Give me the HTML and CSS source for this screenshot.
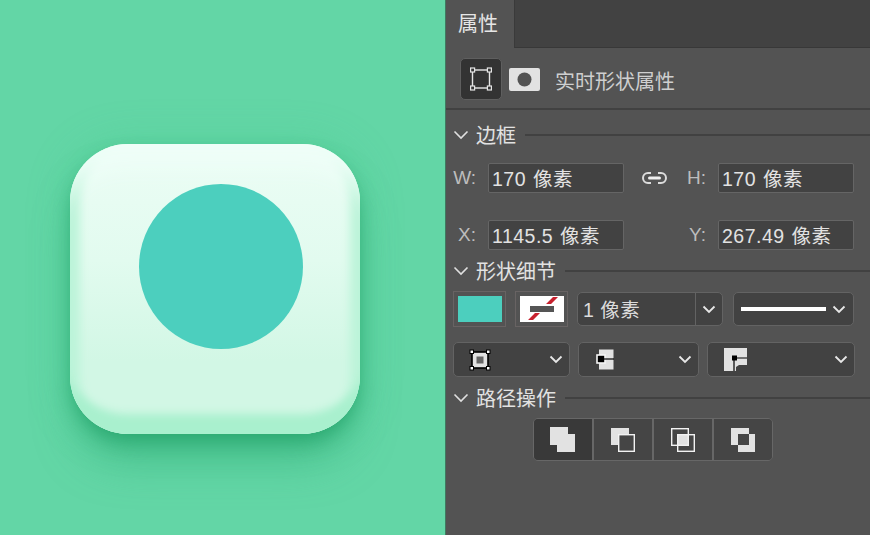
FILE: index.html
```html
<!DOCTYPE html>
<html lang="zh-CN">
<head>
  <meta charset="UTF-8" />
  <meta name="viewport" content="width=device-width, initial-scale=1.0" />
  <title>属性</title>
  <link rel="stylesheet" href="styles.css">
</head>
<body>
  <div class="canvas">
    <div class="app-icon">
      <div class="app-dot"></div>
    </div>
  </div>

  <div class="panel">
    <div class="tabbar">
      <div class="tab">属性</div>
      <div class="tab-rest"></div>
    </div>

    <div class="shape-head">
      <div class="shape-btn">
        <svg width="22" height="24" viewBox="0 0 22 24">
          <rect x="2.5" y="3" width="17" height="18" fill="none" stroke="#e4e4e4" stroke-width="1.4"/>
          <g fill="#333" stroke="#e4e4e4" stroke-width="1.2">
            <rect x="0.6" y="1" width="4" height="4"/>
            <rect x="17.4" y="1" width="4" height="4"/>
            <rect x="0.6" y="19" width="4" height="4"/>
            <rect x="17.4" y="19" width="4" height="4"/>
          </g>
        </svg>
      </div>
      <svg class="mask-icon" width="31" height="23" viewBox="0 0 31 23">
        <rect width="31" height="23" rx="2" fill="#e2e2e2"/>
        <circle cx="15.5" cy="11.5" r="7" fill="#535353"/>
      </svg>
      <span class="head-title">实时形状属性</span>
    </div>

    <div class="section-title first">
      <svg class="chev" width="16" height="10" viewBox="0 0 16 10"><path d="M1.5 1.5 8 8l6.5-6.5" fill="none" stroke="#e0e0e0" stroke-width="1.6"/></svg>
      <span>边框</span>
      <i class="rule"></i>
    </div>

    <div class="field-row top">
      <label class="lbl">W:</label>
      <div class="input">170 像素</div>
      <div class="mid">
        <svg width="27" height="14" viewBox="0 0 27 14">
          <path d="M10 2H7a5 5 0 0 0 0 10h3M17 2h3a5 5 0 0 1 0 10h-3" fill="none" stroke="#dcdcdc" stroke-width="2"/>
          <rect x="7" y="5.5" width="13" height="3" rx="1.5" fill="#f0f0f0"/>
        </svg>
        <label class="lbl">H:</label>
      </div>
      <div class="input">170 像素</div>
    </div>

    <div class="field-row bottom">
      <label class="lbl">X:</label>
      <div class="input">1145.5 像素</div>
      <div class="mid end">
        <label class="lbl">Y:</label>
      </div>
      <div class="input">267.49 像素</div>
    </div>

    <div class="section-title detail">
      <svg class="chev" width="16" height="10" viewBox="0 0 16 10"><path d="M1.5 1.5 8 8l6.5-6.5" fill="none" stroke="#e0e0e0" stroke-width="1.6"/></svg>
      <span>形状细节</span>
      <i class="rule"></i>
    </div>

    <div class="stroke-row">
      <div class="swatch"><div class="swatch-fill"></div></div>
      <div class="swatch">
        <svg width="44" height="26" viewBox="0 0 44 26">
          <rect width="44" height="26" fill="#fff"/>
          <path d="M26 8 33 1h5l-7 7zM8 24l7-7h5l-7 7z" fill="#c7212e"/>
          <rect x="10" y="10" width="24" height="6" fill="#555"/>
        </svg>
      </div>
      <div class="select size-select">
        <span class="select-text">1 像素</span>
        <span class="select-arrow">
          <svg width="14" height="9" viewBox="0 0 14 9"><path d="M1.5 1.5 7 7l5.5-5.5" fill="none" stroke="#e8e8e8" stroke-width="1.8"/></svg>
        </span>
      </div>
      <div class="select line-select">
        <i class="line-sample"></i>
        <svg width="14" height="9" viewBox="0 0 14 9"><path d="M1.5 1.5 7 7l5.5-5.5" fill="none" stroke="#e8e8e8" stroke-width="1.8"/></svg>
      </div>
    </div>

    <div class="align-row">
      <div class="select a1">
        <svg width="24" height="24" viewBox="0 0 24 24">
          <rect x="4" y="4" width="16" height="16" fill="#e2e2e2" stroke="#000" stroke-width="1.6"/>
          <rect x="8.5" y="8.5" width="7" height="7" fill="#666"/>
          <g fill="#fff" stroke="#000">
            <rect x="2" y="2" width="3.5" height="3.5"/>
            <rect x="18.5" y="2" width="3.5" height="3.5"/>
            <rect x="2" y="18.5" width="3.5" height="3.5"/>
            <rect x="18.5" y="18.5" width="3.5" height="3.5"/>
          </g>
        </svg>
        <svg width="14" height="9" viewBox="0 0 14 9"><path d="M1.5 1.5 7 7l5.5-5.5" fill="none" stroke="#e8e8e8" stroke-width="1.8"/></svg>
      </div>
      <div class="select a2">
        <svg width="18" height="21" viewBox="0 0 18 21">
          <rect x="3" y="0.5" width="14.5" height="20" fill="#e2e2e2"/>
          <rect x="1" y="6" width="8" height="8" fill="#000" stroke="#f4f4f4" stroke-width="1.6"/>
          <path d="M8 10h10" stroke="#000" stroke-width="1.2"/>
        </svg>
        <svg width="14" height="9" viewBox="0 0 14 9"><path d="M1.5 1.5 7 7l5.5-5.5" fill="none" stroke="#e8e8e8" stroke-width="1.8"/></svg>
      </div>
      <div class="select a3">
        <svg width="23" height="23" viewBox="0 0 23 23">
          <path d="M0 0h23v17h-8l-3 2v4H0z" fill="#e2e2e2"/>
          <path d="M10 10h13M10 10v13" stroke="#000" stroke-width="1.2"/>
          <rect x="8" y="7.5" width="5" height="5" fill="#000"/>
        </svg>
        <svg width="14" height="9" viewBox="0 0 14 9"><path d="M1.5 1.5 7 7l5.5-5.5" fill="none" stroke="#e8e8e8" stroke-width="1.8"/></svg>
      </div>
    </div>

    <div class="section-title path">
      <svg class="chev" width="16" height="10" viewBox="0 0 16 10"><path d="M1.5 1.5 8 8l6.5-6.5" fill="none" stroke="#e0e0e0" stroke-width="1.6"/></svg>
      <span>路径操作</span>
      <i class="rule"></i>
    </div>

    <div class="path-ops">
      <div class="op active">
        <svg width="26" height="26" viewBox="0 0 26 26">
          <path d="M0 0h18v7h7v18H7v-7H0z" fill="#e2e2e2"/>
        </svg>
      </div>
      <div class="op">
        <svg width="24" height="24" viewBox="0 0 24 24">
          <rect x="0" y="0" width="18" height="17" fill="#e2e2e2"/>
          <rect x="7.7" y="6.7" width="15.6" height="16.6" fill="#454545" stroke="#f2f2f2" stroke-width="1.4"/>
        </svg>
      </div>
      <div class="op">
        <svg width="24" height="24" viewBox="0 0 24 24">
          <rect x="7" y="6" width="10" height="11" fill="#e2e2e2"/>
          <rect x="0.7" y="0.7" width="16.6" height="16.6" fill="none" stroke="#f2f2f2" stroke-width="1.4"/>
          <rect x="6.7" y="6.7" width="16.6" height="16.6" fill="none" stroke="#f2f2f2" stroke-width="1.4"/>
        </svg>
      </div>
      <div class="op">
        <svg width="24" height="24" viewBox="0 0 24 24">
          <path d="M0 0h18v6h6v18H7v-7H0z" fill="#e2e2e2"/>
          <rect x="7" y="6" width="11" height="11" fill="#454545"/>
        </svg>
      </div>
    </div>
  </div>
</body>
</html>
```

FILE: styles.css
```css
html, body {
  height: 100%;
}

body {
  margin: 0;
  display: flex;
  overflow: hidden;
  font-family: "Liberation Sans", "Noto Sans CJK SC", sans-serif;
  background-color: #535353;
  color: #dcdcdc;
}

/* left side, the artboard */
.canvas {
  width: 445px;
  flex-shrink: 0;
  box-sizing: border-box;
  padding: 144px 0 0 70px;
  background: #63d6a6;
}

.app-icon {
  width: 290px;
  height: 290px;
  box-sizing: border-box;
  padding: 40px 0 0 69px;
  border-radius: 58px;
  background: linear-gradient(#ecfdf5, #e2fbef 40%, #d2f7e5 75%);
  box-shadow:
    inset 0 46px 22px -24px #effef8,
    inset 0 -30px 9px -10px #a9f0ce,
    inset 16px 0 10px -6px #bcf4d9,
    inset -16px 0 10px -6px #bcf4d9,
    0 10px 20px -4px rgba(40, 165, 110, 0.95),
    0 34px 44px -10px rgba(50, 175, 120, 0.6),
    0 0 40px rgba(70, 200, 140, 0.35);
}

.app-dot {
  width: 164px;
  height: 165px;
  border-radius: 50%;
  background: #4ccfbe;
}

/* right side, the properties panel */
.panel {
  flex: 1;
  border-left: 1px solid #3f7a60;
  background: #535353;
}

.tabbar {
  display: flex;
  height: 48px;
}

.tab {
  width: 68px;
  box-sizing: border-box;
  padding: 11px 0 0 12px;
  font-size: 20px;
  line-height: 26px;
  color: #e6e6e6;
}

.tab-rest {
  flex: 1;
  background: #424242;
  border-bottom: 1px solid #383838;
  border-left: 1px solid #3a3a3a;
}

.shape-head {
  display: flex;
  align-items: center;
  height: 62px;
  padding: 2px 0 0 14px;
  border-bottom: 2px solid #414141;
  box-sizing: border-box;
}

.shape-btn {
  width: 42px;
  height: 42px;
  box-sizing: border-box;
  display: flex;
  align-items: center;
  justify-content: center;
  background: #333;
  border: 1px solid #5f5f5f;
  border-radius: 5px;
}

.mask-icon {
  margin-left: 7px;
}

.head-title {
  margin: 2px 0 0 15px;
  font-size: 20px;
  color: #cfcfcf;
}

.section-title {
  display: flex;
  align-items: center;
  height: 24px;
  padding-left: 7px;
  font-size: 20px;
  color: #e2e2e2;
}

.section-title span {
  margin-bottom: 2px;
}

.section-title.first {
  margin-top: 13px;
}

.section-title.detail {
  margin-top: 9px;
}

.section-title.path {
  margin-top: 9px;
}

.chev {
  margin-right: 7px;
}

.rule {
  flex: 1;
  height: 2px;
  margin-left: 9px;
  background: #414141;
}

.field-row {
  display: flex;
  align-items: center;
  height: 30px;
}

.field-row.top {
  margin-top: 16px;
}

.field-row.bottom {
  margin-top: 27px;
}

.lbl {
  width: 30px;
  text-align: right;
  font-size: 19px;
  color: #bdbdbd;
  margin-right: 12px;
  flex-shrink: 0;
}

.input {
  width: 136px;
  height: 30px;
  box-sizing: border-box;
  padding-left: 3px;
  background: #424242;
  border: 1px solid #656565;
  border-radius: 2px;
  font-size: 19.5px;
  line-height: 30px;
  letter-spacing: 0.5px;
  word-spacing: 1px;
  color: #e2e2e2;
  white-space: nowrap;
}

.mid {
  width: 94px;
  display: flex;
  align-items: center;
  justify-content: space-between;
  padding-left: 17px;
  box-sizing: border-box;
}

.mid .lbl {
  width: auto;
}

.mid.end {
  justify-content: flex-end;
}

.stroke-row {
  display: flex;
  align-items: center;
  margin-top: 8px;
  padding-left: 7px;
  height: 36px;
}

.swatch {
  width: 53px;
  height: 36px;
  box-sizing: border-box;
  display: flex;
  align-items: center;
  justify-content: center;
  border: 1px solid #686363;
  margin-right: 9px;
}

.swatch-fill {
  width: 44px;
  height: 26px;
  background: #4ccfbe;
}

.select {
  display: flex;
  align-items: center;
  justify-content: space-between;
  box-sizing: border-box;
  background: #424242;
  border: 1px solid #636363;
  border-radius: 5px;
}

.size-select {
  width: 146px;
  height: 34px;
  margin-right: 10px;
}

.select-text {
  flex: 1;
  padding: 0 0 2px 5px;
  font-size: 19.5px;
  letter-spacing: 0.5px;
  color: #dcdcdc;
}

.select-arrow {
  width: 26px;
  height: 100%;
  display: flex;
  align-items: center;
  justify-content: center;
  border-left: 1px solid #636363;
}

.line-select {
  width: 121px;
  height: 34px;
  padding: 0 7px;
}

.line-sample {
  width: 85px;
  height: 4px;
  background: #fff;
}

.align-row {
  display: flex;
  gap: 8px;
  margin-top: 15px;
  padding-left: 7px;
}

.align-row .select {
  height: 35px;
  padding-right: 6px;
}

.a1 {
  width: 117px;
  padding-left: 14px;
}

.a2 {
  width: 121px;
  padding-left: 17px;
}

.a3 {
  width: 148px;
  padding-left: 16px;
}

.path-ops {
  display: flex;
  width: 240px;
  height: 43px;
  box-sizing: border-box;
  margin: 8px 0 0 87px;
  border: 1px solid #676767;
  border-radius: 5px;
  overflow: hidden;
}

.op {
  flex: 1;
  display: flex;
  align-items: center;
  justify-content: center;
  background: #454545;
  border-left: 2px solid #676767;
}

.op:first-child {
  border-left: none;
}

.op.active {
  background: #393939;
}
```
